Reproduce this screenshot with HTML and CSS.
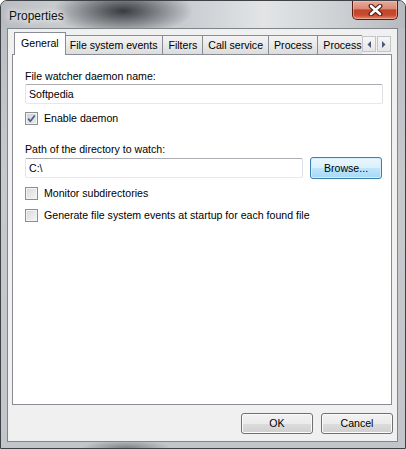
FILE: index.html
```html
<!DOCTYPE html>
<html lang="en">
<head>
    <meta charset="UTF-8">
    <title>Properties</title>
    <link rel="stylesheet" href="styles.css">
</head>
<body>
    <div class="window">
        <div class="titlebar">
            <span class="title">Properties</span>
            <div class="close">
                <svg width="15" height="12" viewBox="0 0 15 12">
                    <path d="M3 2 L12 10 M12 2 L3 10" stroke="#4d1a12" stroke-width="4.8" stroke-linecap="round"/>
                    <path d="M3 2 L12 10 M12 2 L3 10" stroke="#ffffff" stroke-width="2.6" stroke-linecap="round"/>
                </svg>
            </div>
        </div>

        <div class="client">
            <div class="tabs">
                <div class="tab-list">
                    <div class="tab active">General</div>
                    <div class="tab">File system events</div>
                    <div class="tab">Filters</div>
                    <div class="tab">Call service</div>
                    <div class="tab">Process</div>
                    <div class="tab">Process</div>
                </div>
                <div class="tab-scroll">
                    <div class="arrow">
                        <svg width="4" height="7" viewBox="0 0 4 7"><polygon points="4,0 4,7 0.5,3.5" fill="#4b5a7a"/></svg>
                    </div>
                    <div class="arrow">
                        <svg width="4" height="7" viewBox="0 0 4 7"><polygon points="0,0 0,7 3.5,3.5" fill="#4b5a7a"/></svg>
                    </div>
                </div>
            </div>

            <div class="panel">
                <div class="label first">File watcher daemon name:</div>
                <div class="textbox wide">Softpedia</div>

                <div class="check-row enable">
                    <span class="checkbox checked">
                        <svg width="11" height="11" viewBox="0 0 11 11"><path d="M2.2 5.6 L4.4 8.2 L8.8 2.4" fill="none" stroke="#4a5b98" stroke-width="1.7"/></svg>
                    </span>
                    <span>Enable daemon</span>
                </div>

                <div class="label path">Path of the directory to watch:</div>
                <div class="path-row">
                    <div class="textbox path-box">C:\</div>
                    <div class="button default">Browse...</div>
                </div>

                <div class="check-row monitor">
                    <span class="checkbox"></span>
                    <span>Monitor subdirectories</span>
                </div>
                <div class="check-row generate">
                    <span class="checkbox"></span>
                    <span>Generate file system events at startup for each found file</span>
                </div>
            </div>

            <div class="actions">
                <div class="button">OK</div>
                <div class="button">Cancel</div>
            </div>
        </div>
    </div>
</body>
</html>
```

FILE: styles.css
```css
* {
    box-sizing: border-box;
}
body {
    margin: 0;
    font-family: "Liberation Sans", Arial, sans-serif;
    font-size: 10.6px;
    color: #000;
    background: #fff;
}
.window {
    width: 406px;
    height: 449px;
    display: flex;
    flex-direction: column;
    padding: 0 7px 6px 6px;
    border: 1px solid #3e4246;
    border-radius: 7px 7px 0 0;
    background:
        radial-gradient(ellipse 45px 8px at 125px 100%, rgba(70, 74, 78, 0.55), rgba(70, 74, 78, 0)),
        linear-gradient(180deg, #b9bdc2, #c6cacd 40%, #c2c6ca);
}
.titlebar {
    height: 27px;
    margin: 0 -7px 0 -6px;
    padding: 0 7px 0 8px;
    display: flex;
    justify-content: space-between;
    align-items: flex-start;
    border-radius: 6px 6px 0 0;
    background:
        radial-gradient(ellipse 70px 24px at 122px 10px, rgba(48, 52, 56, 0.95), rgba(48, 52, 56, 0)),
        linear-gradient(90deg, #b8bcc1, #c6cacd 12%, #c8ccd0 45%, #e2e4e6 65%, #d0d3d6 82%, #b6babe);
}
.title {
    margin-top: 8px;
    font-size: 12px;
    color: #111;
    text-shadow: 0 0 6px #fff, 0 0 10px rgba(255, 255, 255, 0.9);
}
.close {
    width: 46px;
    height: 19px;
    display: flex;
    align-items: center;
    justify-content: center;
    border: 1px solid #5a1c12;
    border-top: none;
    border-radius: 0 0 5px 5px;
    background: linear-gradient(180deg, #e8ab9d 0%, #d98a76 42%, #c2452a 50%, #c84a2e 78%, #e08a6e 100%);
    box-shadow: inset 0 0 0 1px rgba(255, 200, 185, 0.5);
}
.client {
    flex: 1;
    display: flex;
    flex-direction: column;
    padding: 3px 5px 7px 4px;
    border: 1px solid #80858a;
    background: #f0f0f0;
}
.tabs {
    height: 22px;
    display: flex;
    padding-left: 2px;
}
.tab-list {
    width: 348px;
    height: 23px;
    display: flex;
    align-items: flex-start;
    overflow: hidden;
    position: relative;
    z-index: 1;
}
.tab {
    flex: none;
    height: 19px;
    margin-top: 3px;
    margin-left: -1px;
    padding: 2px 5px 0 5px;
    line-height: 14px;
    border: 1px solid #898c95;
    border-bottom: none;
    background: linear-gradient(180deg, #f4f4f4, #e9e9e9 50%, #dcdcdc);
    white-space: nowrap;
}
.tab.active {
    height: 23px;
    margin-top: 0;
    margin-left: 0;
    margin-right: -1px;
    padding: 3px 6px 0 6px;
    background: #fff;
    position: relative;
    z-index: 2;
}
.tab-scroll {
    display: flex;
    gap: 1px;
    margin-top: 4px;
    height: 16px;
}
.arrow {
    width: 14px;
    height: 16px;
    display: flex;
    align-items: center;
    justify-content: center;
    border: 1px solid #c2c4c8;
    background: linear-gradient(180deg, #f6f6f6, #e6e6e6);
}
.panel {
    flex: 1;
    display: flex;
    flex-direction: column;
    align-items: flex-start;
    padding: 15px 8px 0 12px;
    border: 1px solid #898c95;
    background: #fff;
}
.label {
    line-height: 13px;
}
.label.path {
    margin-top: 18px;
}
.textbox {
    height: 20px;
    padding: 0 3px;
    line-height: 18px;
    border: 1px solid;
    border-color: #abadb3 #dbdfe6 #e3e9ef #e2e3ea;
    border-radius: 2px;
    background: #fff;
}
.textbox.wide {
    margin-top: 1px;
    align-self: stretch;
}
.check-row {
    display: flex;
    align-items: center;
    gap: 6px;
    height: 13px;
    line-height: 13px;
}
.check-row.enable {
    margin-top: 8px;
}
.check-row.monitor {
    margin-top: 8px;
}
.check-row.generate {
    margin-top: 9px;
}
.checkbox {
    width: 13px;
    height: 13px;
    display: flex;
    align-items: center;
    justify-content: center;
    border: 1px solid #8e8f8f;
    background: linear-gradient(135deg, #d8d8d8, #f6f6f6);
    box-shadow: inset 0 0 0 1px #f2f2f2;
}
.checkbox.checked {
    background: linear-gradient(135deg, #d0d0d0, #ececec);
}
.path-row {
    margin-top: 1px;
    display: flex;
    align-items: center;
    gap: 7px;
}
.path-box {
    width: 278px;
}
.button {
    width: 72px;
    height: 21px;
    line-height: 19px;
    text-align: center;
    border: 1px solid #707070;
    border-radius: 3px;
    background: linear-gradient(180deg, #f2f2f2, #ebebeb 50%, #dddddd 50%, #cfcfcf);
    box-shadow: inset 0 0 0 1px #fbfbfb;
}
.button.default {
    height: 22px;
    line-height: 20px;
    border-color: #3c7fb1;
    background: linear-gradient(180deg, #eaf6fd, #d9f0fc 50%, #bee6fd 50%, #a7d9f5);
    box-shadow: inset 0 0 0 1px #d6eefb;
}
.actions {
    display: flex;
    justify-content: flex-end;
    gap: 8px;
    margin-top: 8px;
    margin-right: -1px;
}
```
